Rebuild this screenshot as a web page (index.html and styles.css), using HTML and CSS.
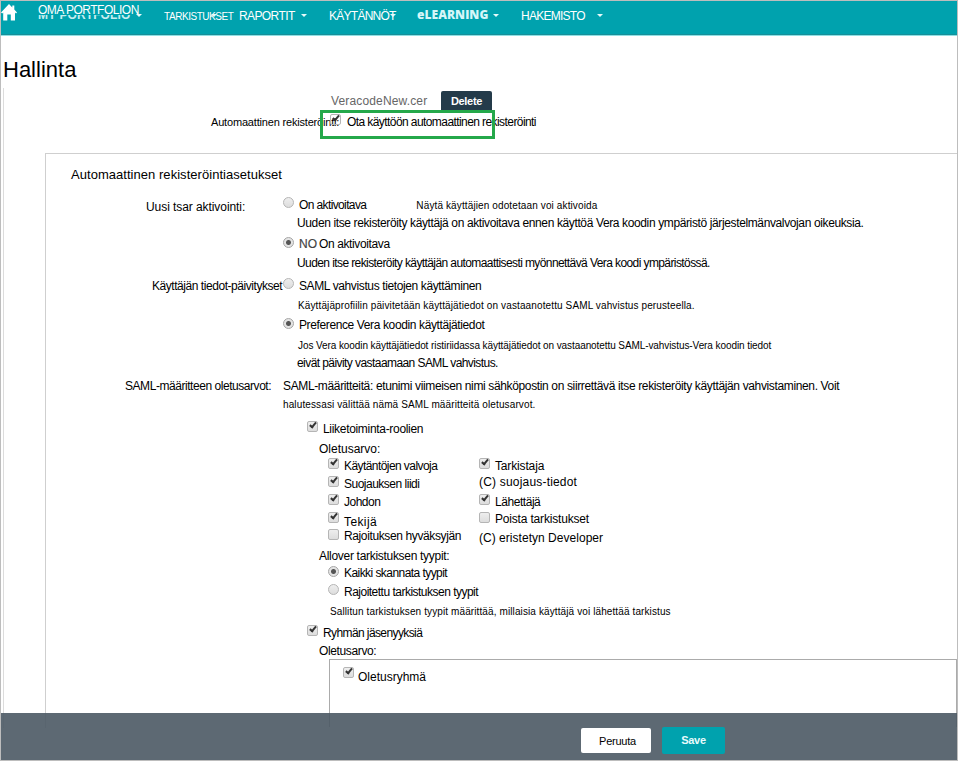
FILE: index.html
```html
<!DOCTYPE html>
<html lang="fi">
<head>
<meta charset="utf-8">
<title>Hallinta</title>
<link rel="stylesheet" href="styles.css">
</head>
<body>
<div class="page">
<nav class="nav">
  <a class="home"><svg width="18" height="18" viewBox="0 0 18 18"><path d="M8 1 L0 9.4 L1.2 10.4 L2.2 9.6 V17.5 H6.3 V11.5 H9.8 V17.5 H14 V9.6 L15 10.4 L16 9.4 L13.3 6.5 V2.5 H11.3 V4.4 Z" fill="#fff"/></svg></a>
  <a class="item portfolio"><b class="ghost">MY PORTFOLIO</b><span class="t-portfolio">OMA PORTFOLION</span><i class="caret"></i></a>
  <a class="item scans"><span class="t-scans">TARKISTUKSET</span><i class="caret"></i></a>
  <a class="item reports"><span class="t-reports">RAPORTIT</span><i class="caret"></i></a>
  <a class="item policies"><span class="t-policies">KÄYTÄNNÖT</span><i class="caret"></i></a>
  <a class="item learning"><span class="t-learning">eLEARNING</span><i class="caret"></i></a>
  <a class="item directory"><span class="t-directory">HAKEMISTO</span><i class="caret"></i></a>
</nav>
<main class="main">
  <h1><span class="t-title">Hallinta</span></h1>
  <div class="panel">
    <div class="cert"><span class="t-cert">VeracodeNew.cer</span><button class="delete"><span class="t-delete">Delete</span></button></div>
    <div class="enroll">
      <span class="t-enroll">Automaattinen rekisteröinti:</span>
      <i class="box on"></i><span class="t-enable">Ota käyttöön automaattinen rekisteröinti</span>
      <div class="highlight"></div>
    </div>
    <section class="settings">
      <h2><span class="t-settings">Automaattinen rekisteröintiasetukset</span></h2>
      <div class="group">
        <div class="label l1"><span class="t-act">Uusi tsar aktivointi:</span></div>
        <div class="fields">
          <div class="row h18"><i class="radio"></i><span class="t-must">On aktivoitava</span><span class="small pending t-pending">Näytä käyttäjien odotetaan voi aktivoida</span></div>
          <div class="row h21 in"><span class="t-must-note">Uuden itse rekisteröity käyttäjä on aktivoitava ennen käyttöä Vera koodin ympäristö järjestelmänvalvojan oikeuksia.</span></div>
          <div class="row h19"><i class="radio on low"></i><span class="no">NO</span><span class="t-not">On aktivoitava</span></div>
          <div class="row h23 in"><span class="t-not-note">Uuden itse rekisteröity käyttäjän automaattisesti myönnettävä Vera koodi ympäristössä.</span></div>
        </div>
      </div>
      <div class="group">
        <div class="label l2"><span class="t-upd">Käyttäjän tiedot-päivitykset</span></div>
        <div class="fields">
          <div class="row h19"><i class="radio"></i><span class="t-saml">SAML vahvistus tietojen käyttäminen</span></div>
          <div class="row h20 in small"><span class="t-saml-note">Käyttäjäprofiilin päivitetään käyttäjätiedot on vastaanotettu SAML vahvistus perusteella.</span></div>
          <div class="row h20"><i class="radio on low"></i><span class="t-pref">Preference Vera koodin käyttäjätiedot</span></div>
          <div class="row h18 in small"><span class="t-pref-note">Jos Vera koodin käyttäjätiedot ristiriidassa käyttäjätiedot on vastaanotettu SAML-vahvistus-Vera koodin tiedot</span></div>
          <div class="row h23 in"><span class="t-pref-end">eivät päivity vastaamaan SAML vahvistus.</span></div>
        </div>
      </div>
      <div class="group">
        <div class="label l3"><span class="t-attr">SAML-määritteen oletusarvot:</span></div>
        <div class="fields">
          <div class="row h18"><span class="t-attr-note">SAML-määritteitä: etunimi viimeisen nimi sähköpostin on siirrettävä itse rekisteröity käyttäjän vahvistaminen. Voit</span></div>
          <div class="row h25 small"><span class="t-attr-end">halutessasi välittää nämä SAML määritteitä oletusarvot.</span></div>
          <div class="row h20 lv1"><i class="box on"></i><span class="t-roles">Liiketoiminta-roolien</span></div>
          <div class="row h17 lv2"><span class="t-def1">Oletusarvo:</span></div>
          <div class="roles">
            <div class="col">
              <div class="row h18"><i class="box on"></i><span class="t-r1">Käytäntöjen valvoja</span></div>
              <div class="row h18"><i class="box on"></i><span class="t-r2">Suojauksen liidi</span></div>
              <div class="row h20"><i class="box on"></i><span class="t-r3">Johdon</span></div>
              <div class="row h14"><i class="box on high"></i><span class="t-r4">Tekijä</span></div>
              <div class="row h20"><i class="box low"></i><span class="t-r5">Rajoituksen hyväksyjän</span></div>
            </div>
            <div class="col">
              <div class="row h16"><i class="box on"></i><span class="t-r6">Tarkistaja</span></div>
              <div class="row h20"><span class="t-r7">(C) suojaus-tiedot</span></div>
              <div class="row h17"><i class="box on"></i><span class="t-r8">Lähettäjä</span></div>
              <div class="row h19"><i class="box low"></i><span class="t-r9">Poista tarkistukset</span></div>
              <div class="row h18"><span class="t-r10">(C) eristetyn Developer</span></div>
            </div>
          </div>
          <div class="row h17 lv2"><span class="t-types">Allover tarkistuksen tyypit:</span></div>
          <div class="row h19 lv3"><i class="radio on low"></i><span class="t-all">Kaikki skannata tyypit</span></div>
          <div class="row h19 lv3"><i class="radio"></i><span class="t-lim">Rajoitettu tarkistuksen tyypit</span></div>
          <div class="row h22 lv4 small"><span class="t-types-note">Sallitun tarkistuksen tyypit määrittää, millaisia käyttäjä voi lähettää tarkistus</span></div>
          <div class="row h18 lv1"><i class="box on"></i><span class="t-groups">Ryhmän jäsenyyksiä</span></div>
          <div class="row h17 lv2"><span class="t-def2">Oletusarvo:</span></div>
          <div class="list"><div class="row"><i class="box on high"></i><span class="t-group">Oletusryhmä</span></div></div>
        </div>
      </div>
    </section>
  </div>
</main>
<footer class="actions"><button class="cancel"><span class="t-cancel">Peruuta</span></button><button class="save"><span class="t-save">Save</span></button></footer>
</div>
</body>
</html>
```
FILE: styles.css
```css
* { box-sizing: border-box; }
body { margin: 0; background: #fff; font: 12px/18px "Liberation Sans", Arial, sans-serif; color: #000; }
.page { position: relative; width: 958px; height: 761px; border: 1px solid #bdbdbd; overflow: hidden; }
span { white-space: nowrap; }
h1, h2 { margin: 0; font-weight: 400; }
button { border: 0; padding: 0; font: inherit; }

.nav { display: flex; height: 35px; background: #00a2ae; border-bottom: 1px solid #8fe0e4; color: #fff; box-shadow: inset 0 -1px #168f99; }
.home { width: 37px; padding-top: 2px; line-height: 0; }
.item { position: relative; padding-top: 6px; }
.portfolio { width: 126px; padding-top: 0; }
.portfolio span { position: relative; display: block; width: 104px; height: 14px; background: #00a2ae; line-height: 18px; }
.scans { width: 75px; font-size: 10px; line-height: 19px; }
.reports { width: 90px; }
.policies { width: 88px; }
.learning { width: 104px; padding-top: 5px; font-family: "Open Sans", sans-serif; font-weight: 800; color: #d6f6f8; }
.ghost { position: absolute; left: 0; top: 5px; color: #c6eef0; letter-spacing: .1px; }
.caret { position: absolute; top: 13px; border: 3px solid transparent; border-top-color: #e6fafa; border-bottom: 0; }
.portfolio .caret { left: 98px; }
.scans .caret { left: 47px; }
.reports .caret { left: 62px; }
.policies .caret { left: 61px; }
.learning .caret, .directory .caret { left: 76px; }

h1 { height: 52px; padding: 21px 0 0 2px; font-size: 22px; line-height: 26px; }
.panel { margin-left: 2px; border-left: 1px solid #dcdcdc; height: 640px; }
.cert { display: flex; width: 488px; height: 21px; padding: 3px 0 0 327px; color: #666; line-height: 20px; }
.delete { width: 51px; height: 20px; margin-left: auto; background: #243b4a; color: #fff; border-radius: 2px 2px 0 0; font-size: 11px; font-weight: 700; line-height: 20px; }
.enroll { position: relative; display: flex; height: 44px; padding: 4px 0 0 207px; }
.t-enroll { width: 119px; font-size: 11px; }
.enroll .box { margin: 1px 6px 0 0; background: none; }
.highlight { position: absolute; left: 316px; top: 1px; width: 175px; height: 29px; border: 3px solid #24a84a; }
.settings { margin-left: 41px; border: 1px solid #cfcfcf; border-right: 0; border-bottom: 0; height: 575px; }
h2 { height: 42px; padding: 12px 0 0 25px; font-size: 13px; line-height: 18px; }
.group { display: grid; grid-template-columns: 237px 1fr; }
.l1 { padding: 2px 0 0 100px; }
.l2 { padding-left: 106px; }
.l3 { padding-left: 79px; }
.row { display: flex; }
.row > i + span { margin-left: 5px; }
.row .pending { margin-left: 50px; }
.no { width: 20px; color: #444; -webkit-text-stroke: .2px #444; }
.in { padding-left: 14px; }
.small { font-size: 10px; line-height: 19px; }
.in.small { padding-left: 15px; }
.lv1 { padding-left: 24px; }
.lv2 { padding-left: 36px; }
.lv3 { padding-left: 45px; }
.lv4 { padding-left: 47px; }
.h14 { height: 14px; } .h16 { height: 16px; } .h17 { height: 17px; } .h18 { height: 18px; } .h19 { height: 19px; }
.h20 { height: 20px; } .h21 { height: 21px; } .h22 { height: 22px; } .h23 { height: 23px; } .h25 { height: 25px; }
.roles { display: grid; grid-template-columns: 151px 1fr; padding-left: 45px; height: 90px; }
.radio, .box { flex: none; position: relative; width: 11px; height: 11px; margin-top: 1px; border: 1px solid #b5b5b5; background: linear-gradient(#eee, #ddd); }
.radio { border-radius: 50%; }
.radio.on { background: radial-gradient(circle, #555 0 2px, #e4e4e4 3px); border-color: #a5a5a5; }
.box { border-radius: 2px; }
.box.on::after { content: ""; position: absolute; left: 3px; top: -1px; box-sizing: content-box; width: 2px; height: 5px; border: solid #333; border-width: 0 2px 2px 0; transform: rotate(40deg); }
.row .low { margin-top: 2px; }
.row .high { margin-top: -1px; }
.list { margin-left: 46px; height: 68px; border: 1px solid #ababab; border-bottom: 0; padding: 8px 0 0 13px; }
.list .row > i + span { margin-left: 4px; }

.actions { position: absolute; left: 0; right: 0; bottom: 0; height: 47px; display: flex; align-items: center; padding: 7px 0 0 580px; background: rgba(75, 89, 100, .9); }
.cancel { width: 70px; height: 25px; border-radius: 2px; background: #fff; color: #000; font-size: 11px; line-height: 26px; }
.cancel span { padding-left: 3px; }
.save { width: 63px; height: 27px; margin-left: 11px; border-radius: 2px; background: #00a2ae; color: #e8fbfc; font-size: 11px; font-weight: 700; }

/* letter spacing per text */
.t-portfolio { letter-spacing: -.5px; }
.t-scans { letter-spacing: -.45px; }
.t-reports { letter-spacing: -.6px; }
.t-policies { letter-spacing: -.74px; }
.t-learning { letter-spacing: .05px; }
.t-directory { letter-spacing: -.75px; }
.t-title { letter-spacing: 0; }
.t-cert { letter-spacing: .15px; }
.t-delete { letter-spacing: -.3px; }
.t-enroll { letter-spacing: -.18px; }
.t-enable { letter-spacing: -.58px; }
.t-settings { letter-spacing: .04px; }
.t-act { letter-spacing: -.07px; }
.t-must { letter-spacing: -.62px; }
.t-pending { letter-spacing: .12px; }
.t-must-note { letter-spacing: -.375px; }
.t-not { letter-spacing: -.38px; }
.t-not-note { letter-spacing: -.59px; }
.t-upd { letter-spacing: -.45px; }
.t-saml { letter-spacing: -.38px; }
.t-saml-note { letter-spacing: .12px; }
.t-pref { letter-spacing: -.38px; }
.t-pref-note { letter-spacing: -.085px; }
.t-pref-end { letter-spacing: -.57px; }
.t-attr { letter-spacing: -.45px; }
.t-attr-note { letter-spacing: -.36px; }
.t-attr-end { letter-spacing: .12px; }
.t-roles { letter-spacing: -.31px; }
.t-def1 { letter-spacing: 0; }
.t-r1 { letter-spacing: -.57px; }
.t-r2 { letter-spacing: -.5px; }
.t-r3 { letter-spacing: -.5px; }
.t-r4 { letter-spacing: .4px; }
.t-r5 { letter-spacing: -.38px; }
.t-r6 { letter-spacing: -.15px; }
.t-r7 { letter-spacing: .19px; }
.t-r8 { letter-spacing: -.45px; }
.t-r9 { letter-spacing: -.18px; }
.t-r10 { letter-spacing: .03px; }
.t-types { letter-spacing: -.3px; }
.t-all { letter-spacing: -.56px; }
.t-lim { letter-spacing: -.51px; }
.t-types-note { letter-spacing: .11px; }
.t-groups { letter-spacing: -.6px; }
.t-def2 { letter-spacing: -.37px; }
.t-group { letter-spacing: 0; }
.t-cancel { letter-spacing: -.25px; }
.t-save { letter-spacing: -.25px; }
```
